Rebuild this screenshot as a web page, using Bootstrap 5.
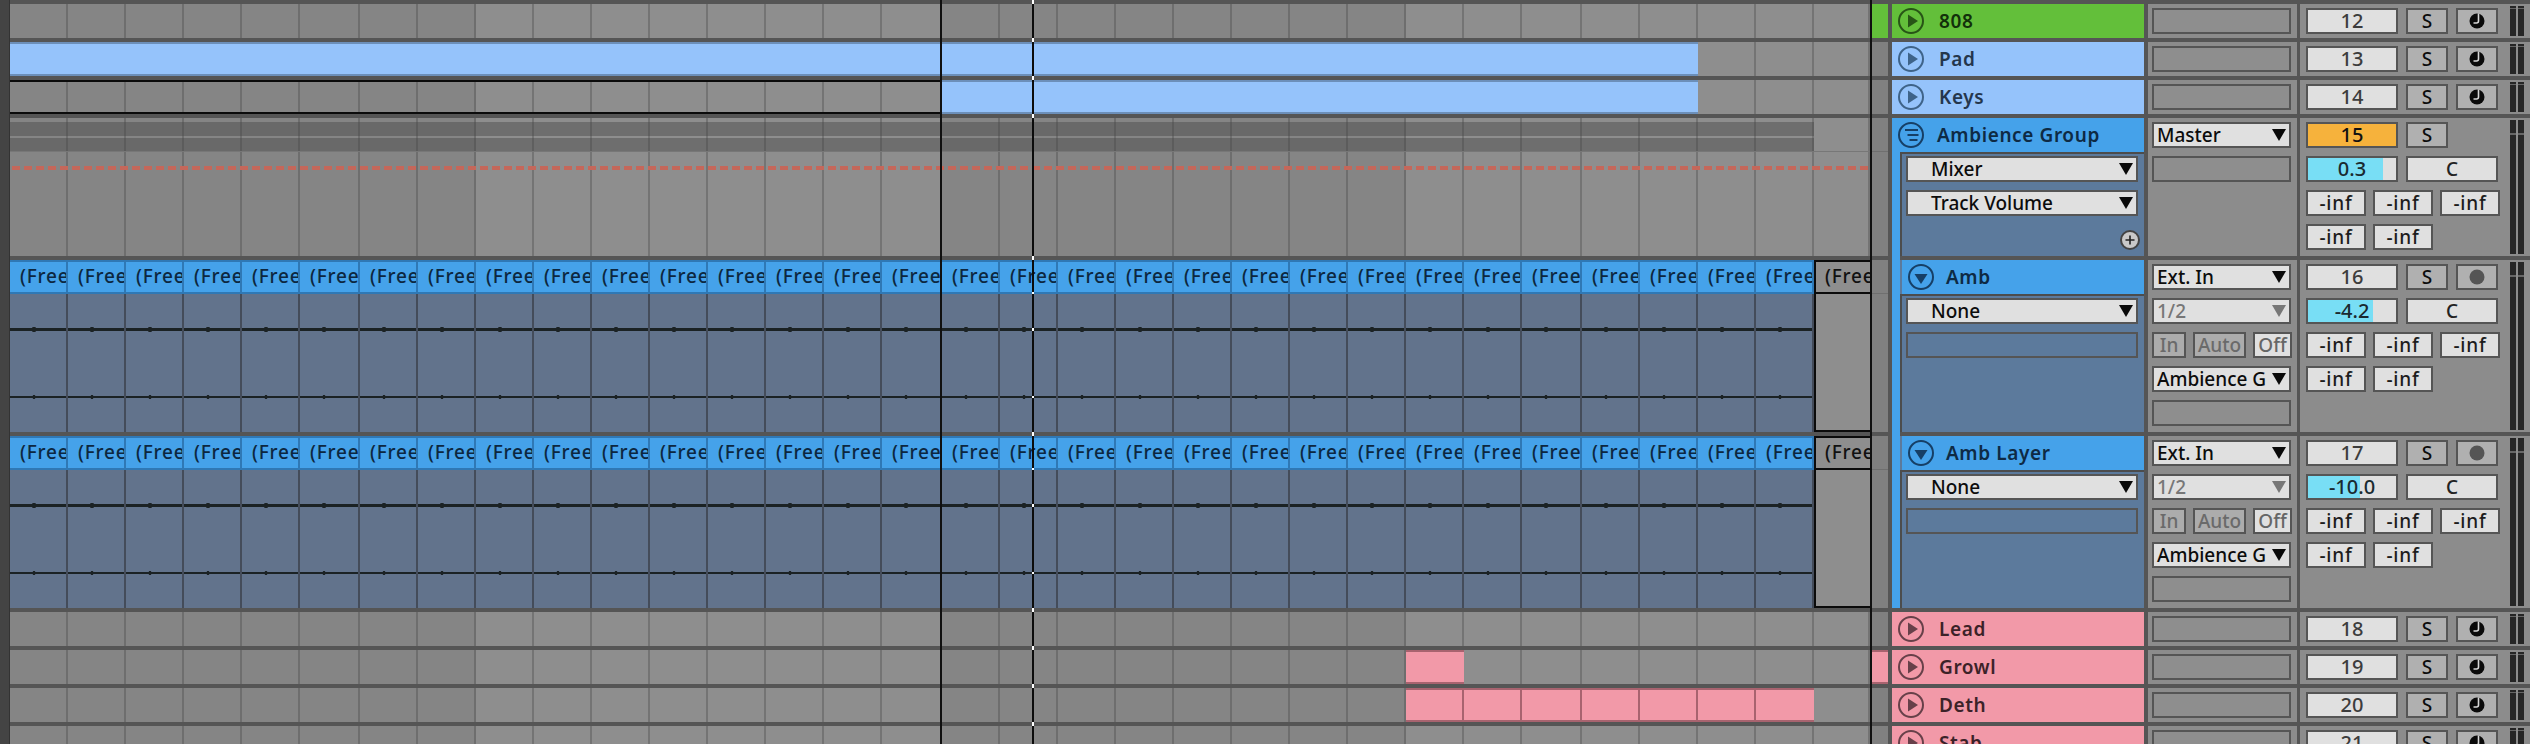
<!DOCTYPE html>
<html lang="en"><head><meta charset="utf-8"><title>Arrangement</title>
<link rel="stylesheet" href="https://cdn.jsdelivr.net/npm/bootstrap@5.3.0/dist/css/bootstrap.min.css">
<style>
:root{--cols:repeat(5,58px) 60px repeat(9,58px) 60px repeat(10,58px) 60px repeat(4,58px) 56px}
html,body{margin:0;background:#555}
.daw{width:2530px;height:744px;overflow:hidden;background:#555;font-family:"Noto Sans","Open Sans",sans-serif;font-size:19px;line-height:1;color:#111;-webkit-font-smoothing:antialiased}
.gutter{width:10px;flex:none;background:#444;border-right:1px solid #333}
.tracks{width:2520px;padding-top:4px;gap:4px}
.trk{flex:none;height:34px}
.trk-group{height:138px}.trk-audio{height:172px}
.lane{width:1860px;flex:none;display:grid;grid-template-columns:var(--cols);grid-template-rows:1fr;background:linear-gradient(90deg,#858585 466px,#8e8e8e 466px 932px,#858585 932px 1396px,#8e8e8e 1396px)}
.lane>*{grid-row:1;min-width:0}
.lines{grid-column:1/-1;display:grid;grid-template-columns:var(--cols)}
.lines i{display:block;border-right:2px solid rgba(70,70,70,.35)}
.clip-blue{background:#95c3fb;border-top:2px solid #6c8fb9;border-bottom:2px solid #6c8fb9}
.clip-pink{background:#f299a8;border-top:2px solid #a8636f;border-bottom:2px solid #a8636f}
.clip-cells{display:grid;grid-template-columns:58px 58px 60px 58px 58px 58px 58px}
.clip-cells i{display:block;border-right:2px solid #a8636f}
.clip-cells i:last-child{border-right:0}
.marquee{border:2px solid #0b0b0b;border-left:0}
.auto-lay{grid-column:1/-1;position:relative}
.ov-top{height:4px}
.ov-band{width:1804px;height:14px;background:rgba(70,70,70,.45)}
.ov-band+.ov-band{margin-top:2px;height:13px}
.ov-rule{height:1px;background:#777;margin-bottom:14px}
.red-dash{height:4px;margin-left:2px;background:repeating-linear-gradient(90deg,#c5675a 0 8px,transparent 8px 12px)}
.clipgrid{grid-column:1/-1;display:grid;grid-template-columns:var(--cols);background:#62738c}
.ccell{min-width:0;border-right:2px solid #444c5a;display:flex;flex-direction:column;background:linear-gradient(#1b2224,#1b2224) 0 68px/100% 3px no-repeat,linear-gradient(#1b2224,#1b2224) 0 136px/100% 2px no-repeat,radial-gradient(circle at 24px 69.5px,#1b2224 2.3px,transparent 2.9px),radial-gradient(circle at 24px 137px,#1b2224 1.6px,transparent 2.2px)}
.chead{height:34px;flex:none;background:#45a2ea;border-top:2px solid #2f78b5;border-bottom:2px solid #2f78b5;margin-right:-2px;border-right:2px solid #2f78b5;padding:5px 0 0 10px;overflow:hidden;white-space:nowrap;color:#0c2740;font-weight:500;letter-spacing:.8px}
.ccell.sel{background:#8e8e8e;border:2px solid #0b0b0b;border-right-width:0}
.ccell.sel .chead{background:#8e8e8e;border:0;border-bottom:2px solid #0b0b0b;margin:0;color:#111;height:32px;padding:5px 0 0 9px}
.strip{width:18px;flex:none;margin-right:4px;background:#808080}
.strip-green{background:#63bf3a}.strip-pink{background:#f299a8;box-shadow:inset 0 2px #a8636f,inset 0 -2px #a8636f}
.strip-split{background:linear-gradient(#808080 33px,#6f6f6f 33px 34px,#808080 34px)}
.hdr{width:252px;flex:none;margin-right:4px}
.hdrline{height:34px;flex:none;padding-left:6px;gap:15px;font-weight:600;letter-spacing:.6px;white-space:nowrap}
.hdrline.tight{gap:13px}
.c-green{background:#63bf3a;color:#12300a}.c-sky{background:#95c3fb;color:#24364c}.c-blue{background:#45a2ea;color:#0e2a44}.c-pink{background:#f299a8;color:#3c2228}
.c-sky svg{color:#3e6389}.c-green svg{color:#275416}.c-pink svg{color:#674049}.c-blue svg{color:#163f66}
.ico{width:26px;height:26px;flex:none}
.panel{flex:1;background:#5c7a9c;border-top:2px solid #4c4c4c;border-left:2px solid #4c4c4c;margin-left:8px;padding:2px 6px 0 4px;gap:8px}
.hdr-sub{margin-left:10px;background:#45a2ea;color:#0e2a44}
.hdr-sub svg{color:#163f66}
.hdr-sub .hdrline{gap:12px}
.audio-hdr{background:#5c7a9c}
.mid{width:149px;flex:none;margin-right:3px;background:#8c8c8c;padding:4px 6px 0 4px;gap:8px}
.ctl{width:230px;flex:none;background:#8c8c8c;padding:4px 0 0 6px}
.ctlrows{width:192px;flex:none;gap:8px}
.bx{height:26px;flex:none;border:2px solid #555;background:#e0e0e0;display:flex;align-items:center;justify-content:center;color:#3c3c3c;font-weight:500;position:relative;white-space:nowrap;overflow:hidden}
.bx-empty{background:#8e8e8e}
.panel .bx-empty{background:transparent}
.num{width:92px;font-size:20px}.sq{width:42px;background:#b0b0b0;color:#0c0c0c}
.wide-c{width:92px;color:#222}
.orange{background:#f6b23c;color:#111}
.val{background:linear-gradient(90deg,#78def5 var(--v),#e0e0e0 var(--v));color:#1a2a30}
.inf{width:60px;color:#1c1c1c;letter-spacing:.8px}
.dd{justify-content:flex-start;padding-left:3px;color:#0c0c0c;padding-right:20px}
.dd::after{content:"";position:absolute;right:3px;top:5px;border:7px solid transparent;border-top:12px solid #0a0a0a;border-bottom:0}
.dd-name{padding-left:23px}
.dd-off{color:#777}.dd-off::after{border-top-color:#777}
.mon{gap:7px}
.in-b,.auto-b{background:#acacac;color:#6a6a6a}
.in-b{width:34px}.auto-b{width:53px}.off-b{width:39px;color:#666}
.mtr{width:14px;margin:-2px 0 2px 12px;gap:2px}
.mtr i{display:block;width:6px;background:linear-gradient(#262626 2px,#666 2px 3px,#262626 3px)}
.mtr-tall i{background:linear-gradient(#262626 13px,#666 13px 15px,#262626 15px)}
.vline{position:absolute;top:0;bottom:0;width:2px;background:#101010}
.stage{position:relative}
.playhead{background:linear-gradient(#fff 0 4px,#0c0c0c 4px 38px,#fff 38px 42px,#0c0c0c 42px 76px,#fff 76px 80px,#0c0c0c 80px 114px,#fff 114px 118px,#0c0c0c 118px 256px,#fff 256px 260px,#0c0c0c 260px 292px,#fff 292px 294px,#0c0c0c 294px 328px,#fff 328px 331px,#0c0c0c 331px 396px,#fff 396px 398px,#0c0c0c 398px 432px,#fff 432px 436px,#0c0c0c 436px 468px,#fff 468px 470px,#0c0c0c 470px 504px,#fff 504px 507px,#0c0c0c 507px 572px,#fff 572px 574px,#0c0c0c 574px 608px,#fff 608px 612px,#0c0c0c 612px 646px,#fff 646px 650px,#0c0c0c 650px 684px,#fff 684px 688px,#0c0c0c 688px 722px,#fff 722px 726px,#0c0c0c 726px)}
.gstrip{position:absolute;left:1892px;top:152px;width:8px;height:456px;background:#45a2ea}
.plus{width:20px;height:20px;align-self:flex-end;margin:6px -2px 0 0}
</style></head>
<body>
<svg width="0" height="0" class="position-absolute"><defs>
<symbol id="i-play" viewBox="0 0 26 26"><circle cx="13" cy="13" r="12" fill="none" stroke="currentColor" stroke-width="2"/><polygon points="10,6.5 10,19.5 20,13" fill="currentColor"/></symbol>
<symbol id="i-down" viewBox="0 0 26 26"><circle cx="13" cy="13" r="12" fill="none" stroke="currentColor" stroke-width="2"/><polygon points="6.5,10 19.5,10 13,20" fill="currentColor"/></symbol>
<symbol id="i-group" viewBox="0 0 26 26"><circle cx="13" cy="13" r="12" fill="none" stroke="currentColor" stroke-width="2"/><path d="M7 8h13M9.5 13h11M11.5 18h8" fill="none" stroke="currentColor" stroke-width="2"/></symbol>
<symbol id="i-clock" viewBox="0 0 18 18"><circle cx="9" cy="9" r="7.5" fill="#0a0a0a"/><path d="M10.5 1.5V9q0 2-2 2H5.5" fill="none" stroke="#d8d8d8" stroke-width="1.6"/></symbol>
</defs></svg>

<div class="daw d-flex stage">
  <div class="gutter"></div>
  <div class="tracks d-flex flex-column">

    <div class="trk d-flex">
      <div class="lane"><div class="lines"></div></div>
      <div class="strip strip-green"></div>
      <div class="hdr hdrline d-flex align-items-center c-green"><svg class="ico"><use href="#i-play"/></svg><span>808</span></div>
      <div class="mid d-flex flex-column"><div class="bx bx-empty"></div></div>
      <div class="ctl d-flex"><div class="ctlrows d-flex"><div class="bx num">12</div><div class="bx sq">S</div><div class="bx sq"><svg width="18" height="18"><use href="#i-clock"/></svg></div></div><div class="mtr d-flex"><i></i><i></i></div></div>
    </div>

    <div class="trk d-flex">
      <div class="lane"><div class="lines"></div><div class="clip-blue" style="grid-column:1/17"></div><div class="clip-blue" style="grid-column:17/30"></div></div>
      <div class="strip"></div>
      <div class="hdr hdrline d-flex align-items-center c-sky"><svg class="ico"><use href="#i-play"/></svg><span>Pad</span></div>
      <div class="mid d-flex flex-column"><div class="bx bx-empty"></div></div>
      <div class="ctl d-flex"><div class="ctlrows d-flex"><div class="bx num">13</div><div class="bx sq">S</div><div class="bx sq"><svg width="18" height="18"><use href="#i-clock"/></svg></div></div><div class="mtr d-flex"><i></i><i></i></div></div>
    </div>

    <div class="trk d-flex">
      <div class="lane"><div class="lines"></div><div class="marquee" style="grid-column:1/17"></div><div class="clip-blue" style="grid-column:17/30"></div></div>
      <div class="strip"></div>
      <div class="hdr hdrline d-flex align-items-center c-sky"><svg class="ico"><use href="#i-play"/></svg><span>Keys</span></div>
      <div class="mid d-flex flex-column"><div class="bx bx-empty"></div></div>
      <div class="ctl d-flex"><div class="ctlrows d-flex"><div class="bx num">14</div><div class="bx sq">S</div><div class="bx sq"><svg width="18" height="18"><use href="#i-clock"/></svg></div></div><div class="mtr d-flex"><i></i><i></i></div></div>
    </div>

    <div class="trk trk-group d-flex">
      <div class="lane"><div class="lines"></div><div class="auto-lay"><div class="ov-top"></div><div class="ov-band"></div><div class="ov-band"></div><div class="ov-rule"></div><div class="red-dash"></div></div></div>
      <div class="strip strip-split"></div>
      <div class="hdr d-flex flex-column">
        <div class="hdrline tight d-flex align-items-center c-blue"><svg class="ico"><use href="#i-group"/></svg><span>Ambience Group</span></div>
        <div class="panel d-flex flex-column">
          <div class="bx dd dd-name">Mixer</div>
          <div class="bx dd dd-name">Track Volume</div>
          <svg class="plus" viewBox="0 0 20 20"><circle cx="10" cy="10" r="9" fill="#c9c9c9" stroke="#444" stroke-width="2"/><path d="M10 5.5v9M5.5 10h9" stroke="#222" stroke-width="1.6"/></svg>
        </div>
      </div>
      <div class="mid d-flex flex-column"><div class="bx dd">Master</div><div class="bx bx-empty"></div></div>
      <div class="ctl d-flex"><div class="ctlrows d-flex flex-column">
        <div class="d-flex gap-2"><div class="bx num orange">15</div><div class="bx sq">S</div></div>
        <div class="d-flex gap-2"><div class="bx num val" style="--v:85%">0.3</div><div class="bx wide-c">C</div></div>
        <div class="d-flex mon"><div class="bx inf">-inf</div><div class="bx inf">-inf</div><div class="bx inf">-inf</div></div>
        <div class="d-flex mon"><div class="bx inf">-inf</div><div class="bx inf">-inf</div></div>
      </div><div class="mtr mtr-tall d-flex"><i></i><i></i></div></div>
    </div>

    <div class="trk trk-audio d-flex">
      <div class="lane"><div class="clipgrid"></div></div>
      <div class="strip strip-split"></div>
      <div class="hdr d-flex flex-column audio-hdr">
        <div class="hdr-sub"><div class="hdrline d-flex align-items-center"><svg class="ico"><use href="#i-down"/></svg><span>Amb</span></div></div>
        <div class="panel d-flex flex-column">
          <div class="bx dd dd-name">None</div><div class="bx bx-empty"></div>
        </div>
      </div>
      <div class="mid d-flex flex-column"><div class="bx dd">Ext. In</div><div class="bx dd dd-off">1/2</div>
        <div class="d-flex mon"><div class="bx in-b">In</div><div class="bx auto-b">Auto</div><div class="bx off-b">Off</div></div>
        <div class="bx dd">Ambience G</div><div class="bx bx-empty"></div></div>
      <div class="ctl d-flex"><div class="ctlrows d-flex flex-column">
        <div class="d-flex gap-2"><div class="bx num">16</div><div class="bx sq">S</div><div class="bx sq"><svg width="18" height="18"><circle cx="9" cy="9" r="7.5" fill="#555"/></svg></div></div>
        <div class="d-flex gap-2"><div class="bx num val" style="--v:74%">-4.2</div><div class="bx wide-c">C</div></div>
        <div class="d-flex mon"><div class="bx inf">-inf</div><div class="bx inf">-inf</div><div class="bx inf">-inf</div></div>
        <div class="d-flex mon"><div class="bx inf">-inf</div><div class="bx inf">-inf</div></div>
      </div><div class="mtr mtr-tall d-flex"><i></i><i></i></div></div>
    </div>

    <div class="trk trk-audio d-flex">
      <div class="lane"><div class="clipgrid"></div></div>
      <div class="strip strip-split"></div>
      <div class="hdr d-flex flex-column audio-hdr">
        <div class="hdr-sub"><div class="hdrline d-flex align-items-center"><svg class="ico"><use href="#i-down"/></svg><span>Amb Layer</span></div></div>
        <div class="panel d-flex flex-column">
          <div class="bx dd dd-name">None</div><div class="bx bx-empty"></div>
        </div>
      </div>
      <div class="mid d-flex flex-column"><div class="bx dd">Ext. In</div><div class="bx dd dd-off">1/2</div>
        <div class="d-flex mon"><div class="bx in-b">In</div><div class="bx auto-b">Auto</div><div class="bx off-b">Off</div></div>
        <div class="bx dd">Ambience G</div><div class="bx bx-empty"></div></div>
      <div class="ctl d-flex"><div class="ctlrows d-flex flex-column">
        <div class="d-flex gap-2"><div class="bx num">17</div><div class="bx sq">S</div><div class="bx sq"><svg width="18" height="18"><circle cx="9" cy="9" r="7.5" fill="#555"/></svg></div></div>
        <div class="d-flex gap-2"><div class="bx num val" style="--v:59%">-10.0</div><div class="bx wide-c">C</div></div>
        <div class="d-flex mon"><div class="bx inf">-inf</div><div class="bx inf">-inf</div><div class="bx inf">-inf</div></div>
        <div class="d-flex mon"><div class="bx inf">-inf</div><div class="bx inf">-inf</div></div>
      </div><div class="mtr mtr-tall d-flex"><i></i><i></i></div></div>
    </div>

    <div class="trk d-flex">
      <div class="lane"><div class="lines"></div></div>
      <div class="strip"></div>
      <div class="hdr hdrline d-flex align-items-center c-pink"><svg class="ico"><use href="#i-play"/></svg><span>Lead</span></div>
      <div class="mid d-flex flex-column"><div class="bx bx-empty"></div></div>
      <div class="ctl d-flex"><div class="ctlrows d-flex"><div class="bx num">18</div><div class="bx sq">S</div><div class="bx sq"><svg width="18" height="18"><use href="#i-clock"/></svg></div></div><div class="mtr d-flex"><i></i><i></i></div></div>
    </div>

    <div class="trk d-flex">
      <div class="lane"><div class="lines"></div><div class="clip-pink" style="grid-column:25/26"></div></div>
      <div class="strip strip-pink"></div>
      <div class="hdr hdrline d-flex align-items-center c-pink"><svg class="ico"><use href="#i-play"/></svg><span>Growl</span></div>
      <div class="mid d-flex flex-column"><div class="bx bx-empty"></div></div>
      <div class="ctl d-flex"><div class="ctlrows d-flex"><div class="bx num">19</div><div class="bx sq">S</div><div class="bx sq"><svg width="18" height="18"><use href="#i-clock"/></svg></div></div><div class="mtr d-flex"><i></i><i></i></div></div>
    </div>

    <div class="trk d-flex">
      <div class="lane"><div class="lines"></div><div class="clip-pink clip-cells" style="grid-column:25/32"><i></i><i></i><i></i><i></i><i></i><i></i><i></i></div></div>
      <div class="strip"></div>
      <div class="hdr hdrline d-flex align-items-center c-pink"><svg class="ico"><use href="#i-play"/></svg><span>Deth</span></div>
      <div class="mid d-flex flex-column"><div class="bx bx-empty"></div></div>
      <div class="ctl d-flex"><div class="ctlrows d-flex"><div class="bx num">20</div><div class="bx sq">S</div><div class="bx sq"><svg width="18" height="18"><use href="#i-clock"/></svg></div></div><div class="mtr d-flex"><i></i><i></i></div></div>
    </div>

    <div class="trk d-flex">
      <div class="lane"><div class="lines"></div></div>
      <div class="strip"></div>
      <div class="hdr hdrline d-flex align-items-center c-pink"><svg class="ico"><use href="#i-play"/></svg><span>Stab</span></div>
      <div class="mid d-flex flex-column"><div class="bx bx-empty"></div></div>
      <div class="ctl d-flex"><div class="ctlrows d-flex"><div class="bx num">21</div><div class="bx sq">S</div><div class="bx sq"><svg width="18" height="18"><use href="#i-clock"/></svg></div></div><div class="mtr d-flex"><i></i><i></i></div></div>
    </div>
  </div>

  <div class="gstrip"></div>
  <div class="vline" style="left:940px"></div>
  <div class="vline playhead" style="left:1032px"></div>
  <div class="vline" style="left:1870px"></div>
</div>
<script>
document.querySelectorAll('.lines').forEach(function(l){l.innerHTML='<i></i>'.repeat(32)});
document.querySelectorAll('.clipgrid').forEach(function(g){
  var h='';for(var n=0;n<32;n++){h+='<div class="ccell'+(n==31?' sel':'')+'"><div class="chead">(Free</div></div>'}
  g.innerHTML=h;
});
</script>
<script src="https://cdn.jsdelivr.net/npm/bootstrap@5.3.0/dist/js/bootstrap.bundle.min.js"></script>
</body></html>
